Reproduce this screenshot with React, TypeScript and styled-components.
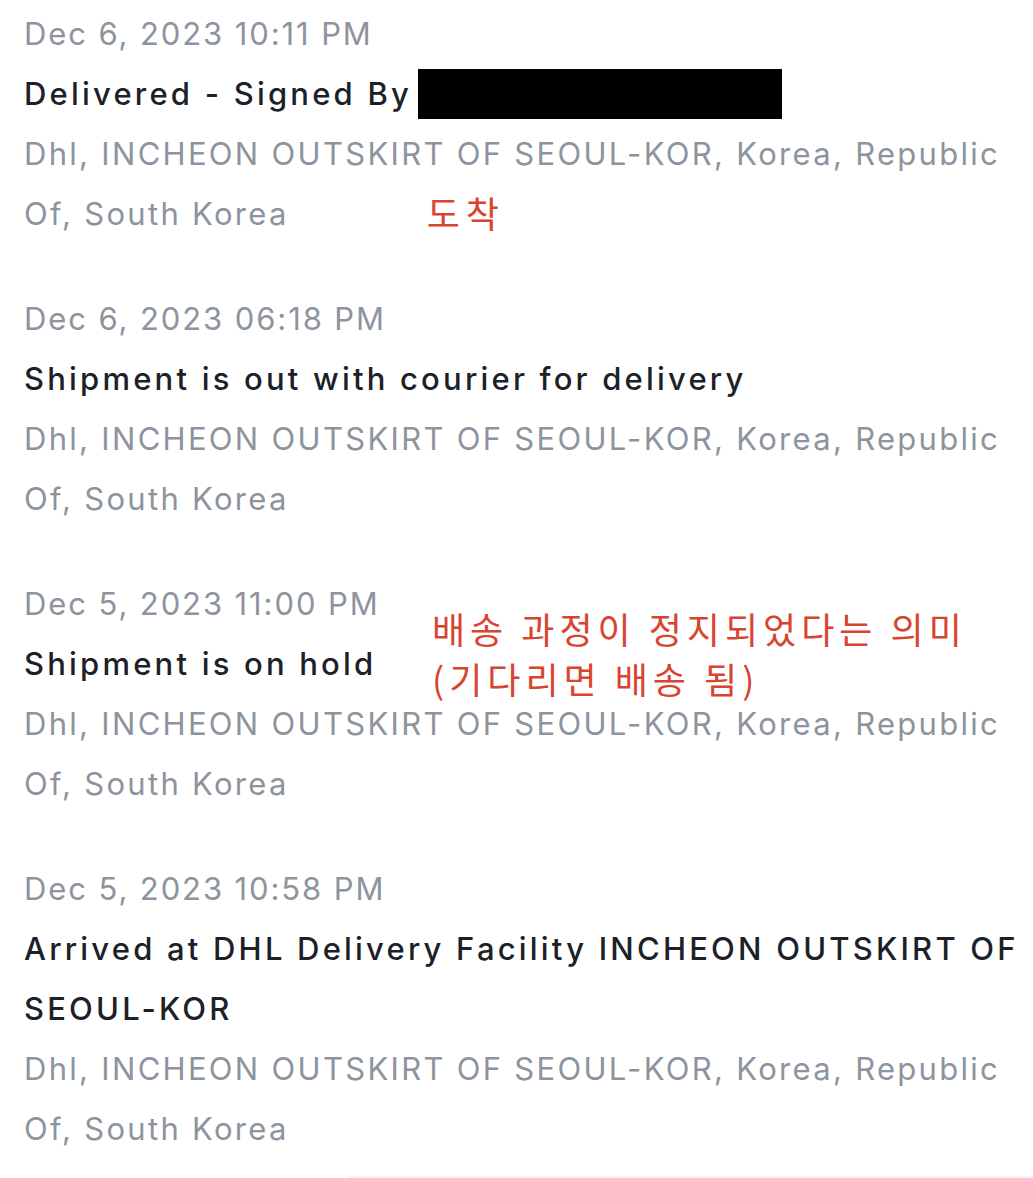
import React from "react";
import styled, { createGlobalStyle } from "styled-components";

const Global = createGlobalStyle`
  html, body { margin: 0; padding: 0; background: #ffffff; }
  body { font-family: "Inter", "Noto Sans CJK KR", sans-serif; }
`;

const Page = styled.div`
  width: 1033px;
  height: 1178px;
  overflow: hidden;
  position: relative;
  padding: 4px 0 0 24px;
  box-sizing: border-box;
`;

const List = styled.div`
  display: flex;
  flex-direction: column;
  gap: 45px;
`;

const Entry = styled.div`
  position: relative;
  display: flex;
  flex-direction: column;
`;

const DateLine = styled.div`
  font-size: 31px;
  line-height: 60px;
  letter-spacing: 1.9px;
  white-space: nowrap;
  color: #8d949e;
`;

const Title = styled.div`
  font-size: 31px;
  line-height: 60px;
  letter-spacing: 3.2px;
  font-weight: 500;
  color: #1c2128;
  width: 1000px;
`;

const Address = styled.div`
  font-size: 31px;
  line-height: 60px;
  letter-spacing: 2.3px;
  color: #8d949e;
  width: 1000px;
`;

const Redacted = styled.span`
  display: inline-block;
  width: 364px;
  height: 50px;
  background: #000;
  vertical-align: middle;
  margin-left: 6px;
  position: relative;
  top: -3px;
`;

const InlineNote = styled.span`
  font-family: "Noto Sans CJK KR", sans-serif;
  color: #d8442f;
  font-size: 36px;
  line-height: 30px;
  letter-spacing: 6px;
  margin-left: 138px;
  position: relative;
  top: 3px;
`;

const Note = styled.span`
  position: absolute;
  left: 408px;
  top: 29px;
  font-family: "Noto Sans CJK KR", sans-serif;
  color: #d8442f;
  font-size: 36px;
  line-height: 50px;
  letter-spacing: 5px;
  white-space: nowrap;
`;

const Divider = styled.div`
  position: absolute;
  left: 350px;
  right: 0;
  bottom: 0;
  height: 2px;
  background: #f3f3f3;
`;

const addr = "Dhl, INCHEON OUTSKIRT OF SEOUL-KOR, Korea, Republic Of, South Korea";

export default function App() {
  return (
    <Page>
      <Global />
      <List>
        <Entry>
          <DateLine>Dec 6, 2023 10:11 PM</DateLine>
          <Title>
            Delivered - Signed By<Redacted />
          </Title>
          <Address>
            {addr}
            <InlineNote>도착</InlineNote>
          </Address>
        </Entry>
        <Entry>
          <DateLine>Dec 6, 2023 06:18 PM</DateLine>
          <Title>Shipment is out with courier for delivery</Title>
          <Address>{addr}</Address>
        </Entry>
        <Entry>
          <DateLine>Dec 5, 2023 11:00 PM</DateLine>
          <Title>Shipment is on hold</Title>
          <Address>{addr}</Address>
          <Note>
            배송 과정이 정지되었다는 의미
            <br />
            (기다리면 배송 됨)
          </Note>
        </Entry>
        <Entry>
          <DateLine>Dec 5, 2023 10:58 PM</DateLine>
          <Title>Arrived at DHL Delivery Facility INCHEON OUTSKIRT OF SEOUL-KOR</Title>
          <Address>{addr}</Address>
        </Entry>
      </List>
      <Divider />
    </Page>
  );
}
